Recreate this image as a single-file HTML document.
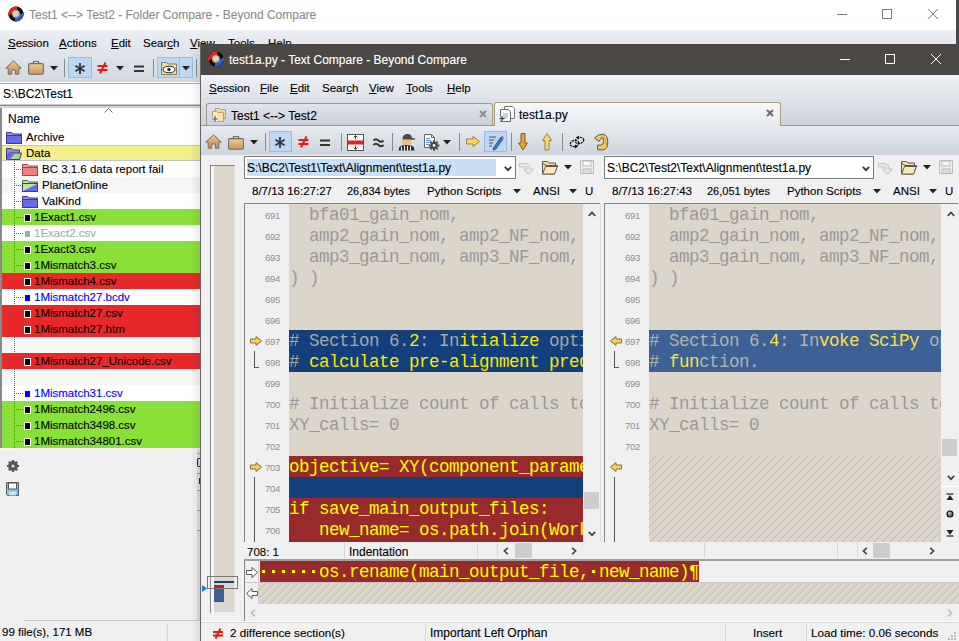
<!DOCTYPE html>
<html><head><meta charset="utf-8">
<style>
*{margin:0;padding:0;box-sizing:border-box}
html,body{width:959px;height:641px;overflow:hidden;background:#fff;position:relative}
body{font-family:"Liberation Sans",sans-serif;font-size:12px;color:#000}
.a{position:absolute}
.t{position:absolute;white-space:pre;line-height:16px;font-size:12px;-webkit-text-stroke:0.12px currentColor}
.m{position:absolute;white-space:pre;font-family:"Liberation Mono",monospace;font-size:17.5px;letter-spacing:-0.5px;line-height:21px}
.u{text-decoration:underline;text-underline-offset:1px}
svg{position:absolute;overflow:visible}
</style></head><body>

<!-- ============ BACKGROUND WINDOW (Folder Compare) ============ -->
<div class="a" style="left:0;top:0;width:959px;height:30px;background:#fff"></div>
<div class="a" style="left:956px;top:0;width:3px;height:44px;background:#4a4846"></div>
<!-- app icon -->
<svg style="left:8px;top:6px" width="16" height="16" viewBox="0 0 16 16">
 <defs><radialGradient id="IG" cx="0.45" cy="0.45" r="0.6"><stop offset="0" stop-color="#d8d8d0"/><stop offset="0.5" stop-color="#d8ccb0"/><stop offset="1" stop-color="#8a8270"/></radialGradient></defs>
 <circle cx="8" cy="8" r="7.6" fill="#0a0a0a"/>
 <path d="M9 0.6 A7.4 7.4 0 0 0 0.8 6.5 L0 6.5 L0 3 L0 10 L5.5 6.5 L4.3 6.5 A3.8 3.8 0 0 1 9 4.2z" fill="#e82424"/>
 <path d="M7 15.4 A7.4 7.4 0 0 0 15.2 9.5 L16 9.5 L16 13 L16 6 L10.5 9.5 L11.7 9.5 A3.8 3.8 0 0 1 7 11.8z" fill="#2a5ae8"/>
 <circle cx="8" cy="8" r="4" fill="url(#IG)"/>
</svg>
<div class="t" style="left:29px;top:7px;color:#8c8c8c">Test1 &lt;--&gt; Test2 - Folder Compare - Beyond Compare</div>
<svg style="left:836px;top:9px" width="110" height="12">
 <line x1="1" y1="5.5" x2="11" y2="5.5" stroke="#777" stroke-width="1"/>
 <rect x="46.5" y="0.5" width="9" height="9" fill="none" stroke="#777"/>
 <path d="M92 0 L102 10 M102 0 L92 10" stroke="#777" stroke-width="1"/>
</svg>

<!-- menu bar -->
<div class="a" style="left:0;top:30px;width:956px;height:52px;background:linear-gradient(#ebeef3,#d3d9e1)"></div>
<div class="t" style="left:8px;top:35px;font-size:11.5px"><span class="u">S</span>ession</div>
<div class="t" style="left:59px;top:35px;font-size:11.5px"><span class="u">A</span>ctions</div>
<div class="t" style="left:111px;top:35px;font-size:11.5px"><span class="u">E</span>dit</div>
<div class="t" style="left:143px;top:35px;font-size:11.5px">Sear<span class="u">c</span>h</div>
<div class="t" style="left:190px;top:35px;font-size:11.5px"><span class="u">V</span>iew</div>
<div class="t" style="left:228px;top:35px;font-size:11.5px"><span class="u">T</span>ools</div>
<div class="t" style="left:268px;top:35px;font-size:11.5px"><span class="u">H</span>elp</div>

<!-- toolbar -->

<svg style="left:5px;top:60px" width="17" height="15" viewBox="0 0 17 15"><defs><linearGradient id="hg" x1="0" y1="0" x2="0" y2="1"><stop offset="0" stop-color="#f0c890"/><stop offset="1" stop-color="#c08850"/></linearGradient></defs><path d="M8.5 0.8 L16.2 8.2 L13.8 8.2 L13.8 14.2 L10.3 14.2 L10.3 10 L6.7 10 L6.7 14.2 L3.2 14.2 L3.2 8.2 L0.8 8.2z" fill="url(#hg)" stroke="#7a6a5a" stroke-width="1" stroke-linejoin="round"/></svg>
<svg style="left:28px;top:60px" width="16" height="15" viewBox="0 0 16 15"><defs><linearGradient id="bg" x1="0" y1="0" x2="0" y2="1"><stop offset="0" stop-color="#f0cc90"/><stop offset="1" stop-color="#c89858"/></linearGradient></defs><path d="M5.5 3.5 L5.5 1.5 L10.5 1.5 L10.5 3.5" fill="none" stroke="#6a6a6a" stroke-width="1.2"/><rect x="0.6" y="3.6" width="14.8" height="10.6" rx="1.5" fill="url(#bg)" stroke="#6a6a6a" stroke-width="1.1"/></svg>
<svg style="left:50px;top:66px" width="8" height="5" viewBox="0 0 8 5"><path d="M0 0 L8 0 L4 4.5z" fill="#222"/></svg>
<div class="a" style="left:64px;top:59px;width:1px;height:18px;background:#8a8a8a"></div>
<div class="a" style="left:68px;top:57px;width:24px;height:21px;background:#bcd8f3;border:1px solid #8cc2ee"></div>
<svg style="left:75px;top:63px" width="10" height="11" viewBox="0 0 10 11"><g stroke="#383838" stroke-width="1.9"><line x1="5" y1="0" x2="5" y2="11"/><line x1="0.4" y1="2.8" x2="9.6" y2="8.2"/><line x1="0.4" y1="8.2" x2="9.6" y2="2.8"/></g></svg>
<svg style="left:97px;top:62px" width="11" height="12" viewBox="0 0 11 12"><g stroke="#e81818" stroke-width="2"><line x1="0.5" y1="4" x2="10.5" y2="4"/><line x1="0.5" y1="8" x2="10.5" y2="8"/><line x1="8.5" y1="0.5" x2="3" y2="11.5"/></g></svg>
<svg style="left:116px;top:66px" width="8" height="5" viewBox="0 0 8 5"><path d="M0 0 L8 0 L4 4.5z" fill="#222"/></svg>
<svg style="left:134px;top:65px" width="10" height="8" viewBox="0 0 10 8"><g stroke="#333" stroke-width="2"><line x1="0" y1="1.5" x2="10" y2="1.5"/><line x1="0" y1="6" x2="10" y2="6"/></g></svg>
<div class="a" style="left:153px;top:59px;width:1px;height:18px;background:#8a8a8a"></div>
<div class="a" style="left:157px;top:57px;width:36px;height:21px;background:#bcd8f3;border:1px solid #8cc2ee"></div>
<div class="a" style="left:179px;top:58px;width:1px;height:19px;background:#90c2ee"></div>
<svg style="left:161px;top:60px" width="16" height="15" viewBox="0 0 16 15"><path d="M0.5 2.5 L5.5 2.5 L7 4 L15.5 4 L15.5 14.5 L0.5 14.5z" fill="#f4dca0" stroke="#8a7a5a"/><ellipse cx="8" cy="9.5" rx="6" ry="3.2" fill="#fff" stroke="#333" stroke-width="1.1"/><circle cx="8" cy="9.5" r="1.8" fill="#333"/></svg>
<svg style="left:182px;top:66px" width="8" height="5" viewBox="0 0 8 5"><path d="M0 0 L8 0 L4 4.5z" fill="#222"/></svg>
<div class="a" style="left:196px;top:59px;width:1px;height:18px;background:#8a8a8a"></div>

<!-- path field -->
<div class="a" style="left:0;top:83px;width:200px;height:22px;background:#fff;border-top:1px solid #aaa;border-bottom:1px solid #ccc"></div>
<div class="t" style="left:3px;top:86px">S:\BC2\Test1</div>
<div class="a" style="left:0;top:105px;width:200px;height:3px;background:#d6d6d6;border-top:1px solid #888"></div>

<!-- tree panel -->
<div class="a" style="left:0;top:108px;width:200px;height:341px;background:#fff;border-left:2px solid #8a8a8a"></div>
<div class="a" style="left:2px;top:129px;width:198px;height:16px;background:#fff"></div>
<div class="a" style="left:2px;top:145px;width:198px;height:16px;background:#f3ef8c;border-top:1px solid #c4c4c4;border-bottom:1px solid #c4c4c4"></div>
<div class="a" style="left:2px;top:161px;width:198px;height:16px;background:#fff"></div>
<div class="a" style="left:2px;top:177px;width:198px;height:16px;background:#f5f6f6"></div>
<div class="a" style="left:2px;top:193px;width:198px;height:16px;background:#fff"></div>
<div class="a" style="left:2px;top:209px;width:198px;height:16px;background:#88e038"></div>
<div class="a" style="left:2px;top:225px;width:198px;height:16px;background:#fff"></div>
<div class="a" style="left:2px;top:241px;width:198px;height:16px;background:#88e038"></div>
<div class="a" style="left:2px;top:257px;width:198px;height:16px;background:#88e038"></div>
<div class="a" style="left:2px;top:273px;width:198px;height:16px;background:#e8292a"></div>
<div class="a" style="left:2px;top:289px;width:198px;height:16px;background:#fff"></div>
<div class="a" style="left:2px;top:305px;width:198px;height:16px;background:#e8292a"></div>
<div class="a" style="left:2px;top:321px;width:198px;height:16px;background:#e8292a"></div>
<div class="a" style="left:2px;top:337px;width:198px;height:16px;background:#f5f6f6"></div>
<div class="a" style="left:2px;top:353px;width:198px;height:16px;background:#e8292a"></div>
<div class="a" style="left:2px;top:369px;width:198px;height:16px;background:#f5f6f6"></div>
<div class="a" style="left:2px;top:385px;width:198px;height:16px;background:#fff"></div>
<div class="a" style="left:2px;top:401px;width:198px;height:16px;background:#88e038"></div>
<div class="a" style="left:2px;top:417px;width:198px;height:16px;background:#88e038"></div>
<div class="a" style="left:2px;top:433px;width:198px;height:16px;background:#88e038"></div>
<svg style="left:6px;top:131px" width="16" height="13" viewBox="0 0 16 13"><path d="M0.5 1.5 L5.5 1.5 L7 3 L15.5 3 L15.5 12.5 L0.5 12.5z" fill="#8c8cd8" stroke="#3c3c8c" stroke-width="1"/><path d="M0.5 4.5 L15.5 4.5 L15.5 12.5 L0.5 12.5z" fill="#6a6af0" stroke="#3c3c8c" stroke-width="1"/></svg>
<div class="t" style="left:26px;top:129px;color:#000;font-size:11.5px">Archive</div>
<svg style="left:6px;top:147px" width="16" height="13" viewBox="0 0 16 13"><path d="M0.5 1.5 L5.5 1.5 L7 3 L13.5 3 L13.5 12.5 L0.5 12.5z" fill="#8c8cd8" stroke="#3c3c8c"/><path d="M0.5 12.5 L3 6 L15.5 6 L13.5 12.5z" fill="#a8d890" stroke="#3c3c8c"/><path d="M0.5 12.5 L3 6 L9 6 L4 12.5z" fill="#6a6af0"/></svg>
<div class="t" style="left:26px;top:145px;color:#000;font-size:11.5px">Data</div>
<div class="a" style="left:14px;top:161px;width:1px;height:16px;background:repeating-linear-gradient(#666 0 1px,transparent 1px 2px)"></div>
<div class="a" style="left:15px;top:169px;width:6px;height:1px;background:repeating-linear-gradient(90deg,transparent 0 1px,#666 1px 2px)"></div>
<svg style="left:22px;top:163px" width="16" height="13" viewBox="0 0 16 13"><path d="M0.5 1.5 L5.5 1.5 L7 3 L15.5 3 L15.5 12.5 L0.5 12.5z" fill="#e8a0a0" stroke="#a04848" stroke-width="1"/><path d="M0.5 4.5 L15.5 4.5 L15.5 12.5 L0.5 12.5z" fill="#f08080" stroke="#a04848" stroke-width="1"/></svg>
<div class="t" style="left:42px;top:161px;color:#000;font-size:11.5px">BC 3.1.6 data report fail</div>
<div class="a" style="left:14px;top:177px;width:1px;height:16px;background:repeating-linear-gradient(#666 0 1px,transparent 1px 2px)"></div>
<div class="a" style="left:15px;top:185px;width:6px;height:1px;background:repeating-linear-gradient(90deg,transparent 0 1px,#666 1px 2px)"></div>
<svg style="left:22px;top:179px" width="16" height="13" viewBox="0 0 16 13"><path d="M0.5 1.5 L5.5 1.5 L7 3 L15.5 3 L15.5 12.5 L0.5 12.5z" fill="#b8e0a0" stroke="#507040"/><path d="M0.5 4.5 L15.5 4.5 L15.5 12.5 L0.5 12.5z" fill="#b8e8a0" stroke="#404070"/><path d="M15 5 L15 12 L1 12z" fill="#6a6af0"/></svg>
<div class="t" style="left:42px;top:177px;color:#000;font-size:11.5px">PlanetOnline</div>
<div class="a" style="left:14px;top:193px;width:1px;height:16px;background:repeating-linear-gradient(#666 0 1px,transparent 1px 2px)"></div>
<div class="a" style="left:15px;top:201px;width:6px;height:1px;background:repeating-linear-gradient(90deg,transparent 0 1px,#666 1px 2px)"></div>
<svg style="left:22px;top:195px" width="16" height="13" viewBox="0 0 16 13"><path d="M0.5 1.5 L5.5 1.5 L7 3 L15.5 3 L15.5 12.5 L0.5 12.5z" fill="#8c8cd8" stroke="#3c3c8c" stroke-width="1"/><path d="M0.5 4.5 L15.5 4.5 L15.5 12.5 L0.5 12.5z" fill="#6a6af0" stroke="#3c3c8c" stroke-width="1"/></svg>
<div class="t" style="left:42px;top:193px;color:#000;font-size:11.5px">ValKind</div>
<div class="a" style="left:14px;top:209px;width:1px;height:16px;background:repeating-linear-gradient(#666 0 1px,transparent 1px 2px)"></div>
<div class="a" style="left:15px;top:217px;width:8px;height:1px;background:repeating-linear-gradient(90deg,transparent 0 1px,#666 1px 2px)"></div>
<div class="a" style="left:24px;top:214px;width:7px;height:8px;background:#000;border:1px solid #fff"></div>
<div class="t" style="left:34px;top:209px;color:#000;font-size:11.5px">1Exact1.csv</div>
<div class="a" style="left:14px;top:225px;width:1px;height:16px;background:repeating-linear-gradient(#666 0 1px,transparent 1px 2px)"></div>
<div class="a" style="left:15px;top:233px;width:8px;height:1px;background:repeating-linear-gradient(90deg,transparent 0 1px,#666 1px 2px)"></div>
<div class="a" style="left:25px;top:231px;width:5px;height:6px;background:#aaa"></div>
<div class="t" style="left:34px;top:225px;color:#aaa;font-size:11.5px">1Exact2.csv</div>
<div class="a" style="left:14px;top:241px;width:1px;height:16px;background:repeating-linear-gradient(#666 0 1px,transparent 1px 2px)"></div>
<div class="a" style="left:15px;top:249px;width:8px;height:1px;background:repeating-linear-gradient(90deg,transparent 0 1px,#666 1px 2px)"></div>
<div class="a" style="left:24px;top:246px;width:7px;height:8px;background:#000;border:1px solid #fff"></div>
<div class="t" style="left:34px;top:241px;color:#000;font-size:11.5px">1Exact3.csv</div>
<div class="a" style="left:14px;top:257px;width:1px;height:16px;background:repeating-linear-gradient(#666 0 1px,transparent 1px 2px)"></div>
<div class="a" style="left:15px;top:265px;width:8px;height:1px;background:repeating-linear-gradient(90deg,transparent 0 1px,#666 1px 2px)"></div>
<div class="a" style="left:24px;top:262px;width:7px;height:8px;background:#000;border:1px solid #fff"></div>
<div class="t" style="left:34px;top:257px;color:#000;font-size:11.5px">1Mismatch3.csv</div>
<div class="a" style="left:14px;top:273px;width:1px;height:16px;background:repeating-linear-gradient(#666 0 1px,transparent 1px 2px)"></div>
<div class="a" style="left:15px;top:281px;width:8px;height:1px;background:repeating-linear-gradient(90deg,transparent 0 1px,#666 1px 2px)"></div>
<div class="a" style="left:24px;top:278px;width:7px;height:8px;background:#000;border:1px solid #fff"></div>
<div class="t" style="left:34px;top:273px;color:#000;font-size:11.5px">1Mismatch4.csv</div>
<div class="a" style="left:14px;top:289px;width:1px;height:16px;background:repeating-linear-gradient(#666 0 1px,transparent 1px 2px)"></div>
<div class="a" style="left:15px;top:297px;width:8px;height:1px;background:repeating-linear-gradient(90deg,transparent 0 1px,#666 1px 2px)"></div>
<div class="a" style="left:25px;top:295px;width:5px;height:6px;background:#0000ff"></div>
<div class="t" style="left:34px;top:289px;color:#0000ff;font-size:11.5px">1Mismatch27.bcdv</div>
<div class="a" style="left:14px;top:305px;width:1px;height:16px;background:repeating-linear-gradient(#666 0 1px,transparent 1px 2px)"></div>
<div class="a" style="left:15px;top:313px;width:8px;height:1px;background:repeating-linear-gradient(90deg,transparent 0 1px,#666 1px 2px)"></div>
<div class="a" style="left:24px;top:310px;width:7px;height:8px;background:#000;border:1px solid #fff"></div>
<div class="t" style="left:34px;top:305px;color:#000;font-size:11.5px">1Mismatch27.csv</div>
<div class="a" style="left:14px;top:321px;width:1px;height:16px;background:repeating-linear-gradient(#666 0 1px,transparent 1px 2px)"></div>
<div class="a" style="left:15px;top:329px;width:8px;height:1px;background:repeating-linear-gradient(90deg,transparent 0 1px,#666 1px 2px)"></div>
<div class="a" style="left:24px;top:326px;width:7px;height:8px;background:#000;border:1px solid #fff"></div>
<div class="t" style="left:34px;top:321px;color:#000;font-size:11.5px">1Mismatch27.htm</div>
<div class="a" style="left:14px;top:337px;width:1px;height:16px;background:repeating-linear-gradient(#666 0 1px,transparent 1px 2px)"></div>
<div class="a" style="left:14px;top:353px;width:1px;height:16px;background:repeating-linear-gradient(#666 0 1px,transparent 1px 2px)"></div>
<div class="a" style="left:15px;top:361px;width:8px;height:1px;background:repeating-linear-gradient(90deg,transparent 0 1px,#666 1px 2px)"></div>
<div class="a" style="left:24px;top:358px;width:7px;height:8px;background:#000;border:1px solid #fff"></div>
<div class="t" style="left:34px;top:353px;color:#000;font-size:11.5px">1Mismatch27_Unicode.csv</div>
<div class="a" style="left:14px;top:369px;width:1px;height:16px;background:repeating-linear-gradient(#666 0 1px,transparent 1px 2px)"></div>
<div class="a" style="left:14px;top:385px;width:1px;height:16px;background:repeating-linear-gradient(#666 0 1px,transparent 1px 2px)"></div>
<div class="a" style="left:15px;top:393px;width:8px;height:1px;background:repeating-linear-gradient(90deg,transparent 0 1px,#666 1px 2px)"></div>
<div class="a" style="left:25px;top:391px;width:5px;height:6px;background:#0000ff"></div>
<div class="t" style="left:34px;top:385px;color:#0000ff;font-size:11.5px">1Mismatch31.csv</div>
<div class="a" style="left:14px;top:401px;width:1px;height:16px;background:repeating-linear-gradient(#666 0 1px,transparent 1px 2px)"></div>
<div class="a" style="left:15px;top:409px;width:8px;height:1px;background:repeating-linear-gradient(90deg,transparent 0 1px,#666 1px 2px)"></div>
<div class="a" style="left:24px;top:406px;width:7px;height:8px;background:#000;border:1px solid #fff"></div>
<div class="t" style="left:34px;top:401px;color:#000;font-size:11.5px">1Mismatch2496.csv</div>
<div class="a" style="left:14px;top:417px;width:1px;height:16px;background:repeating-linear-gradient(#666 0 1px,transparent 1px 2px)"></div>
<div class="a" style="left:15px;top:425px;width:8px;height:1px;background:repeating-linear-gradient(90deg,transparent 0 1px,#666 1px 2px)"></div>
<div class="a" style="left:24px;top:422px;width:7px;height:8px;background:#000;border:1px solid #fff"></div>
<div class="t" style="left:34px;top:417px;color:#000;font-size:11.5px">1Mismatch3498.csv</div>
<div class="a" style="left:14px;top:433px;width:1px;height:16px;background:repeating-linear-gradient(#666 0 1px,transparent 1px 2px)"></div>
<div class="a" style="left:15px;top:441px;width:8px;height:1px;background:repeating-linear-gradient(90deg,transparent 0 1px,#666 1px 2px)"></div>
<div class="a" style="left:24px;top:438px;width:7px;height:8px;background:#000;border:1px solid #fff"></div>
<div class="t" style="left:34px;top:433px;color:#000;font-size:11.5px">1Mismatch34801.csv</div>

<!-- bottom panel -->
<div class="a" style="left:0;top:448px;width:200px;height:172px;background:#f0f0f0"></div>
<div class="a" style="left:0;top:448px;width:18px;height:2px;background:#fafafa"></div>
<div class="t" style="left:8px;top:110.53px;font-size:12px;color:#000;">Name</div>
<svg style="left:104px;top:108px" width="9" height="5" viewBox="0 0 9 5"><path d="M0.5 4.5 L4.5 0.5 L8.5 4.5" fill="none" stroke="#777" stroke-width="1"/></svg>
<svg style="left:7px;top:460px" width="12" height="12" viewBox="0 0 12 12"><circle cx="6" cy="6" r="3.6" fill="none" stroke="#555" stroke-width="2.6"/><g stroke="#555" stroke-width="2"><line x1="6" y1="0" x2="6" y2="12"/><line x1="0" y1="6" x2="12" y2="6"/><line x1="1.8" y1="1.8" x2="10.2" y2="10.2"/><line x1="10.2" y1="1.8" x2="1.8" y2="10.2"/></g><circle cx="6" cy="6" r="1.6" fill="#ddd"/></svg>
<svg style="left:6px;top:482px" width="13" height="14" viewBox="0 0 13 14"><path d="M0.5 0.5 L12.5 0.5 L12.5 13.5 L1.5 13.5 L0.5 12.5z" fill="#70c8f0" stroke="#555"/><rect x="2.5" y="1" width="8" height="6" fill="#fff" stroke="#555"/><rect x="3" y="9.5" width="7" height="4" fill="#ddd"/></svg>
<div class="a" style="left:24px;top:620px;width:176px;height:1px;background:#c8c8c8"></div>
<div class="a" style="left:167px;top:623px;width:1px;height:18px;background:#d8d8d8"></div>
<div class="a" style="left:197px;top:449px;width:3px;height:171px;background:#dedede"></div>
<div class="a" style="left:197px;top:453px;width:3px;height:1px;background:#999"></div>
<div class="a" style="left:197px;top:473px;width:3px;height:1px;background:#999"></div>
<div class="a" style="left:197px;top:490px;width:3px;height:1px;background:#999"></div>
<div class="a" style="left:197px;top:510px;width:3px;height:1px;background:#999"></div>
<div class="a" style="left:197px;top:530px;width:3px;height:1px;background:#999"></div>
<svg style="left:197px;top:458px" width="3" height="9" viewBox="0 0 3 9"><path d="M3 0.5 L1 0.5 Q0.5 0.5 0.5 2 L0.5 7 Q0.5 8.5 1 8.5 L3 8.5" fill="none" stroke="#222" stroke-width="1"/></svg>
<div class="a" style="left:199px;top:478px;width:1px;height:6px;background:#5a1020"></div>

<!-- status -->
<div class="a" style="left:0;top:620px;width:200px;height:21px;background:#f0f0f0"></div>
<div class="a" style="left:24px;top:620px;width:176px;height:1px;background:#c8c8c8"></div>
<div class="a" style="left:167px;top:623px;width:1px;height:18px;background:#d8d8d8"></div>
<div class="t" style="left:2px;top:624px;font-size:11.5px">99 file(s), 171 MB</div>

<!-- ============ FOREGROUND WINDOW (Text Compare) ============ -->
<div class="a" style="left:190px;top:44px;width:10px;height:597px;background:linear-gradient(90deg,rgba(0,0,0,0),rgba(0,0,0,0.08))"></div>
<div class="a" style="left:200px;top:44px;width:759px;height:597px;background:#f0f0f0;border-left:1px solid #666"></div>
<div class="a" style="left:201px;top:44px;width:758px;height:31px;background:#4b4845"></div>
<svg style="left:208px;top:51px" width="16" height="16" viewBox="0 0 16 16">
 <defs><radialGradient id="IG2" cx="0.45" cy="0.45" r="0.6"><stop offset="0" stop-color="#d8d8d0"/><stop offset="0.5" stop-color="#d8ccb0"/><stop offset="1" stop-color="#8a8270"/></radialGradient></defs>
 <circle cx="8" cy="8" r="7.6" fill="#0a0a0a"/>
 <path d="M9 0.6 A7.4 7.4 0 0 0 0.8 6.5 L0 6.5 L0 3 L0 10 L5.5 6.5 L4.3 6.5 A3.8 3.8 0 0 1 9 4.2z" fill="#e82424"/>
 <path d="M7 15.4 A7.4 7.4 0 0 0 15.2 9.5 L16 9.5 L16 13 L16 6 L10.5 9.5 L11.7 9.5 A3.8 3.8 0 0 1 7 11.8z" fill="#2a5ae8"/>
 <circle cx="8" cy="8" r="4" fill="url(#IG2)"/>
</svg>
<div class="t" style="left:229px;top:52px;color:#fff">test1a.py - Text Compare - Beyond Compare</div>
<svg style="left:840px;top:54px" width="110" height="12">
 <line x1="0" y1="5.5" x2="10" y2="5.5" stroke="#fff" stroke-width="1"/>
 <rect x="45.5" y="0.5" width="9" height="9" fill="none" stroke="#fff"/>
 <path d="M91 0 L101 10 M101 0 L91 10" stroke="#fff" stroke-width="1"/>
</svg>

<!-- fg menu -->
<div class="a" style="left:201px;top:75px;width:758px;height:51px;background:linear-gradient(#eef1f5,#cbd2dc)"></div>
<div class="t" style="left:209px;top:79.70px;font-size:11.5px;color:#000;"><span class="u">S</span>ession</div>
<div class="t" style="left:260px;top:79.70px;font-size:11.5px;color:#000;"><span class="u">F</span>ile</div>
<div class="t" style="left:290px;top:79.70px;font-size:11.5px;color:#000;"><span class="u">E</span>dit</div>
<div class="t" style="left:322px;top:79.70px;font-size:11.5px;color:#000;">Sear<span class="u">c</span>h</div>
<div class="t" style="left:369px;top:79.70px;font-size:11.5px;color:#000;"><span class="u">V</span>iew</div>
<div class="t" style="left:406px;top:79.70px;font-size:11.5px;color:#000;"><span class="u">T</span>ools</div>
<div class="t" style="left:447px;top:79.70px;font-size:11.5px;color:#000;"><span class="u">H</span>elp</div>
<div class="a" style="left:201px;top:125px;width:758px;height:1px;background:#a89a80"></div>
<div class="a" style="left:206px;top:103px;width:287px;height:23px;border:1px solid #a89a80;border-bottom:none;border-radius:3px 3px 0 0;background:linear-gradient(#e0e4ea,#c9d0da)"></div>
<div class="a" style="left:206px;top:125px;width:287px;height:1px;background:#a89a80"></div>
<svg style="left:211px;top:107px" width="16" height="16" viewBox="0 0 16 16"><path d="M4.5 1.5 L8.5 1.5 L9.5 2.5 L14.5 2.5 L14.5 11.5 L4.5 11.5z" fill="#f0d8a0" stroke="#b8a070"/><path d="M1.5 4.5 L5.5 4.5 L6.5 5.5 L12.5 5.5 L12.5 14.5 L1.5 14.5z" fill="#fbe4b0" stroke="#b8a070"/><path d="M1 12 L7 12 M4 9 L4 15" stroke="#fff" stroke-width="3"/><path d="M1 12 L7 12 M4 9 L4 15" stroke="#555" stroke-width="1.2"/></svg>
<div class="t" style="left:231px;top:107.53px;font-size:12px;color:#000;">Test1 &lt;--&gt; Test2</div>
<svg style="left:479px;top:110px" width="8" height="8" viewBox="0 0 8 8"><path d="M1 1 L7 7 M7 1 L1 7" stroke="#8a8a8a" stroke-width="2"/></svg>
<div class="a" style="left:494px;top:102px;width:287px;height:24px;border:1px solid #a89a80;border-bottom:none;border-radius:3px 3px 0 0;background:linear-gradient(#f6f8fa,#e6e9ee)"></div>
<div class="a" style="left:495px;top:125px;width:285px;height:1px;background:#e6e9ee"></div>
<svg style="left:499px;top:106px" width="16" height="16" viewBox="0 0 16 16"><path d="M5.5 0.5 L13.5 0.5 L15.5 2.5 L15.5 12.5 L5.5 12.5z" fill="#fff" stroke="#777"/><path d="M1.5 3.5 L9.5 3.5 L11.5 5.5 L11.5 15.5 L1.5 15.5z" fill="#fff" stroke="#666"/><path d="M4 8 L9 8 M4 10 L9 10 M4 12 L8 12" stroke="#7aa0d0" stroke-width="1"/><path d="M0.5 12.5 L5.5 12.5 M3 10 L3 15" stroke="#fff" stroke-width="3"/><path d="M0.5 12.5 L5.5 12.5 M3 10 L3 15" stroke="#444" stroke-width="1.3"/></svg>
<div class="t" style="left:519px;top:106.53px;font-size:12px;color:#000;">test1a.py</div>
<svg style="left:766px;top:109px" width="8" height="8" viewBox="0 0 8 8"><path d="M1 1 L7 7 M7 1 L1 7" stroke="#6a6a6a" stroke-width="2"/></svg>
<div class="a" style="left:201px;top:126px;width:758px;height:29px;background:linear-gradient(#e7ebf0,#cdd4dd)"></div>
<svg style="left:205px;top:134px" width="17" height="15" viewBox="0 0 17 15"><defs><linearGradient id="hg" x1="0" y1="0" x2="0" y2="1"><stop offset="0" stop-color="#f0c890"/><stop offset="1" stop-color="#c08850"/></linearGradient></defs><path d="M8.5 0.8 L16.2 8.2 L13.8 8.2 L13.8 14.2 L10.3 14.2 L10.3 10 L6.7 10 L6.7 14.2 L3.2 14.2 L3.2 8.2 L0.8 8.2z" fill="url(#hg)" stroke="#7a6a5a" stroke-width="1" stroke-linejoin="round"/></svg>
<svg style="left:228px;top:135px" width="16" height="15" viewBox="0 0 16 15"><defs><linearGradient id="bg" x1="0" y1="0" x2="0" y2="1"><stop offset="0" stop-color="#f0cc90"/><stop offset="1" stop-color="#c89858"/></linearGradient></defs><path d="M5.5 3.5 L5.5 1.5 L10.5 1.5 L10.5 3.5" fill="none" stroke="#6a6a6a" stroke-width="1.2"/><rect x="0.6" y="3.6" width="14.8" height="10.6" rx="1.5" fill="url(#bg)" stroke="#6a6a6a" stroke-width="1.1"/></svg>
<svg style="left:250px;top:140px" width="8" height="5" viewBox="0 0 8 5"><path d="M0 0 L8 0 L4 4.5z" fill="#222"/></svg>
<div class="a" style="left:265px;top:133px;width:1px;height:18px;background:#8a8a8a"></div>
<div class="a" style="left:269px;top:131px;width:23px;height:21px;background:#bcd8f3;border:1px solid #8cc2ee"></div>
<svg style="left:275px;top:137px" width="10" height="11" viewBox="0 0 10 11"><g stroke="#383838" stroke-width="1.9"><line x1="5" y1="0" x2="5" y2="11"/><line x1="0.4" y1="2.8" x2="9.6" y2="8.2"/><line x1="0.4" y1="8.2" x2="9.6" y2="2.8"/></g></svg>
<svg style="left:298px;top:136px" width="11" height="12" viewBox="0 0 11 12"><g stroke="#e81818" stroke-width="2"><line x1="0.5" y1="4" x2="10.5" y2="4"/><line x1="0.5" y1="8" x2="10.5" y2="8"/><line x1="8.5" y1="0.5" x2="3" y2="11.5"/></g></svg>
<svg style="left:320px;top:139px" width="10" height="8" viewBox="0 0 10 8"><g stroke="#333" stroke-width="2"><line x1="0" y1="1.5" x2="10" y2="1.5"/><line x1="0" y1="6" x2="10" y2="6"/></g></svg>
<div class="a" style="left:341px;top:133px;width:1px;height:18px;background:#8a8a8a"></div>
<svg style="left:347px;top:134px" width="17" height="17" viewBox="0 0 17 17"><rect x="0.5" y="0.5" width="16" height="16" fill="#fff" stroke="#555"/><rect x="1" y="6.5" width="15" height="4" fill="#e82020"/><path d="M8.5 1.5 L8.5 5.5 M6.5 3.5 L8.5 1.5 L10.5 3.5 M8.5 11.5 L8.5 15.5 M6.5 13.5 L8.5 15.5 L10.5 13.5" stroke="#444" fill="none"/></svg>
<svg style="left:373px;top:137px" width="11" height="10" viewBox="0 0 11 10"><path d="M0.5 3.5 Q3 1 5.5 3.5 Q8 6 10.5 3.5 M0.5 8 Q3 5.5 5.5 8 Q8 10.5 10.5 8" stroke="#333" stroke-width="1.8" fill="none"/></svg>
<div class="a" style="left:392px;top:133px;width:1px;height:18px;background:#8a8a8a"></div>
<svg style="left:398px;top:133px" width="17" height="18" viewBox="0 0 17 18"><path d="M4.5 6.5 Q4.5 1 9.5 1 Q13.5 1 14 5 L17 5.5 L17 6.8 L4.5 6.8z" fill="#4a4a4a"/><path d="M4 6.5 Q3 9 4.5 11 Q6 12.5 9 12.5 Q12 12.5 13 10.5 L13 6.8z" fill="#f0c080"/><path d="M0.5 17.5 L1.5 14 Q3 12 8.5 12 Q14 12 15.5 14 L16.5 17.5z" fill="#222"/><path d="M3.5 13.5 L3.5 17.5 M6.5 12.8 L6.5 17.5 M9.5 12.8 L9.5 17.5 M12.5 13.2 L12.5 17.5" stroke="#fff" stroke-width="1.2"/></svg>
<svg style="left:423px;top:133px" width="17" height="18" viewBox="0 0 17 18"><path d="M1.5 1.5 L8.5 1.5 L11.5 4.5 L11.5 14.5 L1.5 14.5z" fill="#fff" stroke="#666"/><path d="M8.5 1.5 L8.5 4.5 L11.5 4.5" fill="none" stroke="#666"/><path d="M3 5.5 L7 5.5 M3 7.5 L8 7.5 M3 9.5 L7 9.5 M3 11.5 L6 11.5" stroke="#4a80c0" stroke-width="0.9"/><circle cx="11" cy="12.5" r="3.6" fill="#4a4a4a"/><g stroke="#4a4a4a" stroke-width="2"><line x1="11" y1="7.2" x2="11" y2="17.8"/><line x1="5.7" y1="12.5" x2="16.3" y2="12.5"/><line x1="7.3" y1="8.8" x2="14.7" y2="16.2"/><line x1="14.7" y1="8.8" x2="7.3" y2="16.2"/></g><circle cx="11" cy="12.5" r="1.4" fill="#eee"/></svg>
<svg style="left:443px;top:140px" width="8" height="5" viewBox="0 0 8 5"><path d="M0 0 L8 0 L4 4.5z" fill="#222"/></svg>
<div class="a" style="left:459px;top:133px;width:1px;height:18px;background:#8a8a8a"></div>
<svg style="left:466px;top:136px" width="14" height="11" viewBox="0 0 14 11"><path d="M0.5 3 L7 3 L7 0.5 L13.5 5.5 L7 10.5 L7 8 L0.5 8z" fill="#fcd860" stroke="#9a8040"/></svg>
<div class="a" style="left:484px;top:131px;width:23px;height:21px;background:#bcd8f3;border:1px solid #8cc2ee"></div>
<svg style="left:488px;top:134px" width="16" height="16" viewBox="0 0 16 16"><path d="M1 3 L8 3 M1 6 L6 6 M1 9 L5 9 M1 12 L4 12" stroke="#555" stroke-width="1.2"/><path d="M6 13 L13 3 L15 5 L8 15 L5 16z" fill="#3c7ad0" stroke="#2a4a80" stroke-width="0.8"/><path d="M13 3 L14 1.5 L16 3.5 L15 5z" fill="#e06060"/></svg>
<div class="a" style="left:511px;top:133px;width:1px;height:18px;background:#8a8a8a"></div>
<svg style="left:518px;top:133px" width="10" height="18" viewBox="0 0 10 18"><path d="M3 0.5 L7 0.5 L7 10 L9.5 10 L5 17 L0.5 10 L3 10z" fill="#e8a030" stroke="#8a5a10"/></svg>
<svg style="left:542px;top:133px" width="10" height="18" viewBox="0 0 10 18"><path d="M5 0.5 L9.5 7.5 L7 7.5 L7 17 L3 17 L3 7.5 L0.5 7.5z" fill="#fcd870" stroke="#9a8040"/></svg>
<div class="a" style="left:562px;top:133px;width:1px;height:18px;background:#8a8a8a"></div>
<svg style="left:569px;top:135px" width="16" height="14" viewBox="0 0 16 14"><g fill="none" stroke="#111" stroke-width="1.3" stroke-dasharray="2.2 0.8"><ellipse cx="10.5" cy="5.5" rx="4.3" ry="3" transform="rotate(-15 10.5 5.5)"/><ellipse cx="5.5" cy="8.5" rx="4.3" ry="3" transform="rotate(-15 5.5 8.5)"/></g><path d="M7 2.5 L10 0.5 L10 4.5z M9 11.5 L6 13.5 L6 9.5z" fill="#111"/></svg>
<svg style="left:593px;top:133px" width="16" height="18" viewBox="0 0 16 18"><path d="M1.5 5 Q5 1 10 1.2 Q14.8 2 14.8 9 Q14.8 16.5 10 16.8 L4.8 16.8 L4.3 12.2 L8.5 12 Q10.5 11.5 10.5 8.5 Q10.5 4.8 8.8 4.2 L6 8.5z" fill="#f0c850" stroke="#555" stroke-width="1"/><path d="M10.5 4 Q13.5 6 13 12" stroke="#d0a040" fill="none"/></svg>
<div class="a" style="left:201px;top:155px;width:758px;height:466px;background:#f0f0f0"></div>
<div class="a" style="left:210px;top:165px;width:1px;height:448px;background:#888"></div>
<div class="a" style="left:210px;top:165px;width:25px;height:1px;background:#888"></div>
<div class="a" style="left:211px;top:166px;width:3px;height:447px;background:#f8f8f8"></div>
<div class="a" style="left:214px;top:166px;width:20px;height:446px;background:#ddd6cc"></div>
<div class="a" style="left:234px;top:166px;width:1px;height:447px;background:#e4e4e4"></div>
<div class="a" style="left:214px;top:581px;width:20px;height:2px;background:#133f7d"></div>
<div class="a" style="left:214px;top:585px;width:10px;height:3px;background:#a52a2a"></div>
<div class="a" style="left:214px;top:588px;width:10px;height:13px;background:#3d6195"></div>
<div class="a" style="left:214px;top:601px;width:10px;height:1px;background:#a52a2a"></div>
<div class="a" style="left:207px;top:576px;width:31px;height:13px;border:1px solid #777"></div>
<svg style="left:202px;top:585px" width="5" height="7" viewBox="0 0 5 7"><path d="M0 0 L5 3.5 L0 7z" fill="#1e7ad0"/></svg>
<div class="a" style="left:244px;top:156px;width:272px;height:23px;background:#fff;border:1px solid #7a7a7a"></div>
<div class="a" style="left:247px;top:159px;width:249px;height:17px;background:#c7dff7"></div>
<div class="t" style="left:247px;top:160.03px;font-size:12px;color:#000;">S:\BC2\Test1\Text\Alignment\test1a.py</div>
<svg style="left:504px;top:166px" width="8" height="6" viewBox="0 0 8 6"><path d="M0.8 0.8 L4 4.2 L7.2 0.8" fill="none" stroke="#333" stroke-width="1.7"/></svg>
<svg style="left:519px;top:161px" width="16" height="14" viewBox="0 0 16 14"><path d="M0.5 2.5 L6 2.5 Q11 2.5 11 7 L11 8 L14.5 8 L9.5 13.5 L4.5 8 L8 8 L8 7.5 Q8 6 6 6 L0.5 6z" fill="#e8e8e8" stroke="#c4c4c4" stroke-width="1"/></svg>
<svg style="left:542px;top:160px" width="16" height="15" viewBox="0 0 16 15"><path d="M0.5 1.5 L5.5 1.5 L7 3 L13.5 3 L13.5 5.5 L0.5 5.5z" fill="#f6dca4" stroke="#5a5a5a"/><path d="M0.5 14 L0.5 3 L4 5.5 L15.5 5.5 L12.5 14z" fill="#fbe0a8" stroke="#5a5a5a"/><path d="M0.5 14 L3.5 6.5 L15.5 6.5 L12.5 14z" fill="#fde6b4" stroke="#5a5a5a"/></svg>
<svg style="left:564px;top:165px" width="8" height="5" viewBox="0 0 8 5"><path d="M0 0 L8 0 L4 4.5z" fill="#222"/></svg>
<svg style="left:580px;top:160px" width="14" height="14" viewBox="0 0 14 14"><path d="M0.5 0.5 L13.5 0.5 L13.5 13.5 L0.5 13.5z" fill="#eee" stroke="#bbb"/><rect x="3" y="1" width="8" height="5" fill="#f6f6f6" stroke="#bbb"/><rect x="3" y="9" width="8" height="4.5" fill="#ddd" stroke="#bbb"/></svg>
<div class="a" style="left:604px;top:156px;width:270px;height:23px;background:#fff;border:1px solid #7a7a7a"></div>
<div class="t" style="left:607px;top:160.03px;font-size:12px;color:#000;">S:\BC2\Test2\Text\Alignment\test1a.py</div>
<svg style="left:862px;top:166px" width="8" height="6" viewBox="0 0 8 6"><path d="M0.8 0.8 L4 4.2 L7.2 0.8" fill="none" stroke="#333" stroke-width="1.7"/></svg>
<svg style="left:878px;top:161px" width="16" height="14" viewBox="0 0 16 14"><path d="M0.5 2.5 L6 2.5 Q11 2.5 11 7 L11 8 L14.5 8 L9.5 13.5 L4.5 8 L8 8 L8 7.5 Q8 6 6 6 L0.5 6z" fill="#e8e8e8" stroke="#c4c4c4" stroke-width="1"/></svg>
<svg style="left:901px;top:160px" width="16" height="15" viewBox="0 0 16 15"><path d="M0.5 1.5 L5.5 1.5 L7 3 L13.5 3 L13.5 5.5 L0.5 5.5z" fill="#f6dca4" stroke="#5a5a5a"/><path d="M0.5 14 L0.5 3 L4 5.5 L15.5 5.5 L12.5 14z" fill="#fbe0a8" stroke="#5a5a5a"/><path d="M0.5 14 L3.5 6.5 L15.5 6.5 L12.5 14z" fill="#fde6b4" stroke="#5a5a5a"/></svg>
<svg style="left:923px;top:165px" width="8" height="5" viewBox="0 0 8 5"><path d="M0 0 L8 0 L4 4.5z" fill="#222"/></svg>
<svg style="left:939px;top:160px" width="14" height="14" viewBox="0 0 14 14"><path d="M0.5 0.5 L13.5 0.5 L13.5 13.5 L0.5 13.5z" fill="#eee" stroke="#bbb"/><rect x="3" y="1" width="8" height="5" fill="#f6f6f6" stroke="#bbb"/><rect x="3" y="9" width="8" height="4.5" fill="#ddd" stroke="#bbb"/></svg>
<div class="t" style="left:252px;top:183.20px;font-size:11.5px;color:#000;">8/7/13 16:27:27</div>
<div class="t" style="left:347px;top:183.36px;font-size:11px;color:#000;">26,834 bytes</div>
<div class="t" style="left:427px;top:183.20px;font-size:11.5px;color:#000;">Python Scripts</div>
<svg style="left:513px;top:189px" width="8" height="5" viewBox="0 0 8 5"><path d="M0 0 L8 0 L4 4.5z" fill="#222"/></svg>
<div class="t" style="left:533px;top:183.20px;font-size:11.5px;color:#000;">ANSI</div>
<svg style="left:569px;top:189px" width="8" height="5" viewBox="0 0 8 5"><path d="M0 0 L8 0 L4 4.5z" fill="#222"/></svg>
<div class="t" style="left:585px;top:183.20px;font-size:11.5px;color:#000;">U</div>
<div class="t" style="left:612px;top:183.20px;font-size:11.5px;color:#000;">8/7/13 16:27:43</div>
<div class="t" style="left:707px;top:183.36px;font-size:11px;color:#000;">26,051 bytes</div>
<div class="t" style="left:787px;top:183.20px;font-size:11.5px;color:#000;">Python Scripts</div>
<svg style="left:873px;top:189px" width="8" height="5" viewBox="0 0 8 5"><path d="M0 0 L8 0 L4 4.5z" fill="#222"/></svg>
<div class="t" style="left:893px;top:183.20px;font-size:11.5px;color:#000;">ANSI</div>
<svg style="left:929px;top:189px" width="8" height="5" viewBox="0 0 8 5"><path d="M0 0 L8 0 L4 4.5z" fill="#222"/></svg>
<div class="t" style="left:945px;top:183.20px;font-size:11.5px;color:#000;">U</div>
<div class="a" style="left:244px;top:203px;width:1px;height:339px;background:#828282"></div>
<div class="a" style="left:244px;top:203px;width:356px;height:1px;background:#828282"></div>
<div class="a" style="left:245px;top:204px;width:44px;height:338px;background:#f0f0f0"></div>
<div class="a" style="left:289px;top:204px;width:294px;height:338px;background:#dcd5ca"></div>
<div class="t" style="left:245px;top:208px;width:35px;text-align:right;font-size:9.6px;letter-spacing:-0.35px;color:#8f8f8f;-webkit-text-stroke:0">691</div>
<div class="m" style="left:289px;top:205px"><span style="color:#999999">  bfa01_gain_nom,</span></div>
<div class="t" style="left:245px;top:229px;width:35px;text-align:right;font-size:9.6px;letter-spacing:-0.35px;color:#8f8f8f;-webkit-text-stroke:0">692</div>
<div class="m" style="left:289px;top:226px"><span style="color:#999999">  amp2_gain_nom, amp2_NF_nom,</span></div>
<div class="t" style="left:245px;top:250px;width:35px;text-align:right;font-size:9.6px;letter-spacing:-0.35px;color:#8f8f8f;-webkit-text-stroke:0">693</div>
<div class="m" style="left:289px;top:247px"><span style="color:#999999">  amp3_gain_nom, amp3_NF_nom,</span></div>
<div class="t" style="left:245px;top:271px;width:35px;text-align:right;font-size:9.6px;letter-spacing:-0.35px;color:#8f8f8f;-webkit-text-stroke:0">694</div>
<div class="m" style="left:289px;top:268px"><span style="color:#999999">) )</span></div>
<div class="t" style="left:245px;top:292px;width:35px;text-align:right;font-size:9.6px;letter-spacing:-0.35px;color:#8f8f8f;-webkit-text-stroke:0">695</div>
<div class="t" style="left:245px;top:313px;width:35px;text-align:right;font-size:9.6px;letter-spacing:-0.35px;color:#8f8f8f;-webkit-text-stroke:0">696</div>
<div class="t" style="left:245px;top:334px;width:35px;text-align:right;font-size:9.6px;letter-spacing:-0.35px;color:#8f8f8f;-webkit-text-stroke:0">697</div>
<div class="a" style="left:289px;top:330px;width:294px;height:21px;background:#133f7d"></div>
<div class="m" style="left:289px;top:331px"><span style="color:#a6a6a6"># Section 6.</span><span style="color:#ffe600">2</span><span style="color:#a6a6a6">: In</span><span style="color:#ffe600">itialize</span><span style="color:#a6a6a6"> opti</span></div>
<div class="t" style="left:245px;top:355px;width:35px;text-align:right;font-size:9.6px;letter-spacing:-0.35px;color:#8f8f8f;-webkit-text-stroke:0">698</div>
<div class="a" style="left:289px;top:351px;width:294px;height:21px;background:#133f7d"></div>
<div class="m" style="left:289px;top:352px"><span style="color:#a6a6a6"># </span><span style="color:#ffe600">calculate pre-alignment pred</span></div>
<div class="t" style="left:245px;top:376px;width:35px;text-align:right;font-size:9.6px;letter-spacing:-0.35px;color:#8f8f8f;-webkit-text-stroke:0">699</div>
<div class="t" style="left:245px;top:397px;width:35px;text-align:right;font-size:9.6px;letter-spacing:-0.35px;color:#8f8f8f;-webkit-text-stroke:0">700</div>
<div class="m" style="left:289px;top:394px"><span style="color:#999999"># Initialize count of calls to</span></div>
<div class="t" style="left:245px;top:418px;width:35px;text-align:right;font-size:9.6px;letter-spacing:-0.35px;color:#8f8f8f;-webkit-text-stroke:0">701</div>
<div class="m" style="left:289px;top:415px"><span style="color:#999999">XY_calls= 0</span></div>
<div class="t" style="left:245px;top:439px;width:35px;text-align:right;font-size:9.6px;letter-spacing:-0.35px;color:#8f8f8f;-webkit-text-stroke:0">702</div>
<div class="t" style="left:245px;top:460px;width:35px;text-align:right;font-size:9.6px;letter-spacing:-0.35px;color:#8f8f8f;-webkit-text-stroke:0">703</div>
<div class="a" style="left:289px;top:456px;width:294px;height:21px;background:#982a2c"></div>
<div class="m" style="left:289px;top:457px"><span style="color:#ffff00">objective= XY(component_parame</span></div>
<div class="t" style="left:245px;top:481px;width:35px;text-align:right;font-size:9.6px;letter-spacing:-0.35px;color:#8f8f8f;-webkit-text-stroke:0">704</div>
<div class="a" style="left:289px;top:477px;width:294px;height:21px;background:#133f7d"></div>
<div class="m" style="left:289px;top:478px"></div>
<div class="t" style="left:245px;top:502px;width:35px;text-align:right;font-size:9.6px;letter-spacing:-0.35px;color:#8f8f8f;-webkit-text-stroke:0">705</div>
<div class="a" style="left:289px;top:498px;width:294px;height:21px;background:#982a2c"></div>
<div class="m" style="left:289px;top:499px"><span style="color:#ffff00">if save_main_output_files:</span></div>
<div class="t" style="left:245px;top:523px;width:35px;text-align:right;font-size:9.6px;letter-spacing:-0.35px;color:#8f8f8f;-webkit-text-stroke:0">706</div>
<div class="a" style="left:289px;top:519px;width:294px;height:21px;background:#982a2c"></div>
<div class="m" style="left:289px;top:520px"><span style="color:#ffff00">   new_name= os.path.join(Work</span></div>
<div class="a" style="left:289px;top:540px;width:294px;height:21px;background:#982a2c"></div>
<div class="m" style="left:289px;top:541px"></div>
<div class="a" style="left:583px;top:204px;width:17px;height:338px;background:#f0f0f0"></div>
<svg style="left:588px;top:211px" width="8" height="6" viewBox="0 0 8 6"><path d="M0.8 4.8 L4 1.4 L7.2 4.8" fill="none" stroke="#444" stroke-width="1.7"/></svg>
<div class="a" style="left:584px;top:492px;width:15px;height:17px;background:#cdcdcd"></div>
<svg style="left:588px;top:531px" width="8" height="6" viewBox="0 0 8 6"><path d="M0.8 0.8 L4 4.2 L7.2 0.8" fill="none" stroke="#444" stroke-width="1.7"/></svg>
<div class="a" style="left:600px;top:203px;width:1px;height:339px;background:#ddd"></div>
<svg style="left:250px;top:336px" width="12" height="10" viewBox="0 0 12 10"><path d="M0.5 3 L6 3 L6 0.5 L11.5 5 L6 9.5 L6 7 L0.5 7z" fill="#f7d058" stroke="#8a7030"/></svg>
<div class="a" style="left:254px;top:351px;width:1px;height:17px;background:#555"></div>
<div class="a" style="left:254px;top:367px;width:5px;height:1px;background:#555"></div>
<svg style="left:250px;top:462px" width="12" height="10" viewBox="0 0 12 10"><path d="M0.5 3 L6 3 L6 0.5 L11.5 5 L6 9.5 L6 7 L0.5 7z" fill="#f7d058" stroke="#8a7030"/></svg>
<div class="a" style="left:254px;top:477px;width:1px;height:65px;background:#555"></div>
<div class="a" style="left:604px;top:203px;width:1px;height:339px;background:#828282"></div>
<div class="a" style="left:604px;top:203px;width:354px;height:1px;background:#828282"></div>
<div class="a" style="left:605px;top:204px;width:44px;height:338px;background:#f0f0f0"></div>
<div class="a" style="left:649px;top:204px;width:292px;height:338px;background:#dcd5ca"></div>
<svg style="left:649px;top:456px" width="292" height="86" shape-rendering="crispEdges"><defs><pattern id="hp1" width="8" height="8" patternUnits="userSpaceOnUse" x="7" y="0"><rect width="8" height="8" fill="#dcd5ca"/><path d="M0 7h1v1h-1zM1 6h1v1h-1zM2 5h1v1h-1zM3 4h1v1h-1zM4 3h1v1h-1zM5 2h1v1h-1zM6 1h1v1h-1zM7 0h1v1h-1z" fill="#bfb8ad"/></pattern></defs><rect width="292" height="86" fill="url(#hp1)"/></svg>
<div class="t" style="left:605px;top:208px;width:35px;text-align:right;font-size:9.6px;letter-spacing:-0.35px;color:#8f8f8f;-webkit-text-stroke:0">691</div>
<div class="m" style="left:649px;top:205px"><span style="color:#999999">  bfa01_gain_nom,</span></div>
<div class="t" style="left:605px;top:229px;width:35px;text-align:right;font-size:9.6px;letter-spacing:-0.35px;color:#8f8f8f;-webkit-text-stroke:0">692</div>
<div class="m" style="left:649px;top:226px"><span style="color:#999999">  amp2_gain_nom, amp2_NF_nom,</span></div>
<div class="t" style="left:605px;top:250px;width:35px;text-align:right;font-size:9.6px;letter-spacing:-0.35px;color:#8f8f8f;-webkit-text-stroke:0">693</div>
<div class="m" style="left:649px;top:247px"><span style="color:#999999">  amp3_gain_nom, amp3_NF_nom,</span></div>
<div class="t" style="left:605px;top:271px;width:35px;text-align:right;font-size:9.6px;letter-spacing:-0.35px;color:#8f8f8f;-webkit-text-stroke:0">694</div>
<div class="m" style="left:649px;top:268px"><span style="color:#999999">) )</span></div>
<div class="t" style="left:605px;top:292px;width:35px;text-align:right;font-size:9.6px;letter-spacing:-0.35px;color:#8f8f8f;-webkit-text-stroke:0">695</div>
<div class="t" style="left:605px;top:313px;width:35px;text-align:right;font-size:9.6px;letter-spacing:-0.35px;color:#8f8f8f;-webkit-text-stroke:0">696</div>
<div class="t" style="left:605px;top:334px;width:35px;text-align:right;font-size:9.6px;letter-spacing:-0.35px;color:#8f8f8f;-webkit-text-stroke:0">697</div>
<div class="a" style="left:649px;top:330px;width:292px;height:21px;background:#3d6195"></div>
<div class="m" style="left:649px;top:331px"><span style="color:#b2b2b2"># Section 6.</span><span style="color:#ffe040">4</span><span style="color:#b2b2b2">: In</span><span style="color:#ffe040">voke SciPy</span><span style="color:#b2b2b2"> op</span></div>
<div class="t" style="left:605px;top:355px;width:35px;text-align:right;font-size:9.6px;letter-spacing:-0.35px;color:#8f8f8f;-webkit-text-stroke:0">698</div>
<div class="a" style="left:649px;top:351px;width:292px;height:21px;background:#3d6195"></div>
<div class="m" style="left:649px;top:352px"><span style="color:#b2b2b2"># </span><span style="color:#ffe040">fun</span><span style="color:#b2b2b2">ction.</span></div>
<div class="t" style="left:605px;top:376px;width:35px;text-align:right;font-size:9.6px;letter-spacing:-0.35px;color:#8f8f8f;-webkit-text-stroke:0">699</div>
<div class="t" style="left:605px;top:397px;width:35px;text-align:right;font-size:9.6px;letter-spacing:-0.35px;color:#8f8f8f;-webkit-text-stroke:0">700</div>
<div class="m" style="left:649px;top:394px"><span style="color:#999999"># Initialize count of calls to</span></div>
<div class="t" style="left:605px;top:418px;width:35px;text-align:right;font-size:9.6px;letter-spacing:-0.35px;color:#8f8f8f;-webkit-text-stroke:0">701</div>
<div class="m" style="left:649px;top:415px"><span style="color:#999999">XY_calls= 0</span></div>
<div class="t" style="left:605px;top:439px;width:35px;text-align:right;font-size:9.6px;letter-spacing:-0.35px;color:#8f8f8f;-webkit-text-stroke:0">702</div>
<div class="a" style="left:941px;top:204px;width:18px;height:338px;background:#f0f0f0"></div>
<svg style="left:947px;top:211px" width="8" height="6" viewBox="0 0 8 6"><path d="M0.8 4.8 L4 1.4 L7.2 4.8" fill="none" stroke="#444" stroke-width="1.7"/></svg>
<div class="a" style="left:942px;top:439px;width:15px;height:17px;background:#cdcdcd"></div>
<svg style="left:947px;top:475px" width="8" height="6" viewBox="0 0 8 6"><path d="M0.8 0.8 L4 4.2 L7.2 0.8" fill="none" stroke="#444" stroke-width="1.7"/></svg>
<div class="a" style="left:941px;top:486px;width:18px;height:1px;background:#fff"></div>
<svg style="left:946px;top:493px" width="8" height="8" viewBox="0 0 8 8"><path d="M0.5 1 L7.5 1" stroke="#222" stroke-width="1.2"/><path d="M4 2 L7.5 7 L0.5 7z" fill="#222"/></svg>
<svg style="left:946px;top:510px" width="8" height="8" viewBox="0 0 8 8"><circle cx="4" cy="4" r="3" fill="#777" stroke="#111" stroke-width="1.1"/><circle cx="3.3" cy="3.3" r="1.1" fill="#ddd"/></svg>
<svg style="left:946px;top:529px" width="8" height="8" viewBox="0 0 8 8"><path d="M0.5 1 L7.5 1 L4 6z" fill="#222"/><path d="M0.5 7 L7.5 7" stroke="#222" stroke-width="1.2"/></svg>
<svg style="left:610px;top:336px" width="12" height="10" viewBox="0 0 12 10"><path d="M11.5 3 L6 3 L6 0.5 L0.5 5 L6 9.5 L6 7 L11.5 7z" fill="#f7d058" stroke="#8a7030"/></svg>
<div class="a" style="left:614px;top:351px;width:1px;height:17px;background:#555"></div>
<div class="a" style="left:614px;top:367px;width:5px;height:1px;background:#555"></div>
<svg style="left:610px;top:462px" width="12" height="10" viewBox="0 0 12 10"><path d="M11.5 3 L6 3 L6 0.5 L0.5 5 L6 9.5 L6 7 L11.5 7z" fill="#f7d058" stroke="#8a7030"/></svg>
<div class="a" style="left:614px;top:477px;width:1px;height:65px;background:#555"></div>
<div class="a" style="left:244px;top:542px;width:357px;height:17px;background:#f0f0f0"></div>
<div class="t" style="left:247px;top:544.20px;font-size:11.5px;color:#000;">708: 1</div>
<div class="a" style="left:344px;top:543px;width:1px;height:15px;background:#d8d8d8"></div>
<div class="t" style="left:349px;top:544.03px;font-size:12px;color:#000;">Indentation</div>
<div class="a" style="left:477px;top:543px;width:1px;height:15px;background:#d8d8d8"></div>
<div class="a" style="left:497px;top:543px;width:1px;height:15px;background:#d8d8d8"></div>
<svg style="left:503px;top:547px" width="6" height="8" viewBox="0 0 6 8"><path d="M4.8 0.8 L1.4 4 L4.8 7.2" fill="none" stroke="#444" stroke-width="1.7"/></svg>
<div class="a" style="left:515px;top:543px;width:17px;height:15px;background:#cdcdcd"></div>
<svg style="left:571px;top:547px" width="6" height="8" viewBox="0 0 6 8"><path d="M1.2 0.8 L4.6 4 L1.2 7.2" fill="none" stroke="#444" stroke-width="1.7"/></svg>
<div class="a" style="left:604px;top:542px;width:355px;height:17px;background:#f0f0f0"></div>
<div class="a" style="left:704px;top:543px;width:1px;height:15px;background:#d8d8d8"></div>
<div class="a" style="left:837px;top:543px;width:1px;height:15px;background:#d8d8d8"></div>
<div class="a" style="left:857px;top:543px;width:1px;height:15px;background:#d8d8d8"></div>
<svg style="left:862px;top:547px" width="6" height="8" viewBox="0 0 6 8"><path d="M4.8 0.8 L1.4 4 L4.8 7.2" fill="none" stroke="#444" stroke-width="1.7"/></svg>
<div class="a" style="left:873px;top:543px;width:17px;height:15px;background:#cdcdcd"></div>
<svg style="left:929px;top:547px" width="6" height="8" viewBox="0 0 6 8"><path d="M1.2 0.8 L4.6 4 L1.2 7.2" fill="none" stroke="#444" stroke-width="1.7"/></svg>
<div class="a" style="left:244px;top:559px;width:715px;height:1px;background:#a0a0a0"></div>
<div class="a" style="left:244px;top:560px;width:715px;height:1px;background:#a0a0a0"></div>
<div class="a" style="left:244px;top:560px;width:1px;height:61px;background:#828282"></div>
<div class="a" style="left:245px;top:561px;width:714px;height:60px;background:#f0f0f0"></div>
<div class="a" style="left:260px;top:561px;width:439px;height:21px;background:#982a2c"></div>
<div class="a" style="left:245px;top:582px;width:714px;height:1px;background:#c8c8c8"></div>
<svg style="left:259px;top:583px" width="700" height="21" shape-rendering="crispEdges"><defs><pattern id="hp1" width="8" height="8" patternUnits="userSpaceOnUse" x="5" y="1"><rect width="8" height="8" fill="#dcd5ca"/><path d="M0 7h1v1h-1zM1 6h1v1h-1zM2 5h1v1h-1zM3 4h1v1h-1zM4 3h1v1h-1zM5 2h1v1h-1zM6 1h1v1h-1zM7 0h1v1h-1z" fill="#bfb8ad"/></pattern></defs><rect width="700" height="21" fill="url(#hp1)"/></svg>
<div class="a" style="left:258px;top:561px;width:1px;height:43px;background:#d0d0d0"></div>
<svg style="left:246px;top:567px" width="12" height="11" viewBox="0 0 12 11"><path d="M0.5 3.5 L6 3.5 L6 0.5 L11.5 5.5 L6 10.5 L6 7.5 L0.5 7.5z" fill="#fff" stroke="#555"/></svg>
<svg style="left:246px;top:588px" width="12" height="11" viewBox="0 0 12 11"><path d="M11.5 3.5 L6 3.5 L6 0.5 L0.5 5.5 L6 10.5 L6 7.5 L11.5 7.5z" fill="#fff" stroke="#555"/></svg>
<div class="m" style="left:259px;top:562px;color:#ffff00">      os.rename(main_output_file, new_name)¶</div>
<div class="a" style="left:262px;top:570px;width:3px;height:3px;background:#ffff00"></div>
<div class="a" style="left:272px;top:570px;width:3px;height:3px;background:#ffff00"></div>
<div class="a" style="left:282px;top:570px;width:3px;height:3px;background:#ffff00"></div>
<div class="a" style="left:292px;top:570px;width:3px;height:3px;background:#ffff00"></div>
<div class="a" style="left:302px;top:570px;width:3px;height:3px;background:#ffff00"></div>
<div class="a" style="left:312px;top:570px;width:3px;height:3px;background:#ffff00"></div>
<div class="a" style="left:592px;top:570px;width:3px;height:3px;background:#ffff00"></div>
<svg style="left:250px;top:609px" width="6" height="8" viewBox="0 0 6 8"><path d="M4.8 0.8 L1.4 4 L4.8 7.2" fill="none" stroke="#bbb" stroke-width="1.7"/></svg>
<svg style="left:947px;top:609px" width="6" height="8" viewBox="0 0 6 8"><path d="M1.2 0.8 L4.6 4 L1.2 7.2" fill="none" stroke="#bbb" stroke-width="1.7"/></svg>
<div class="a" style="left:201px;top:621px;width:758px;height:1px;background:#fff"></div>
<div class="a" style="left:201px;top:622px;width:758px;height:1px;background:#d4d4d4"></div>
<div class="a" style="left:201px;top:623px;width:758px;height:18px;background:#f0f0f0"></div>
<svg style="left:213px;top:628px" width="10" height="11" viewBox="0 0 10 11"><g stroke="#e81818" stroke-width="2"><line x1="0" y1="4" x2="10" y2="4"/><line x1="0" y1="7.5" x2="10" y2="7.5"/><line x1="7.5" y1="0.5" x2="2.5" y2="10.5"/></g></svg>
<div class="t" style="left:230px;top:625.13px;font-size:11.7px;color:#000;">2 difference section(s)</div>
<div class="a" style="left:425px;top:624px;width:1px;height:17px;background:#d8d8d8"></div>
<div class="t" style="left:430px;top:625.03px;font-size:12px;color:#000;">Important Left Orphan</div>
<div class="a" style="left:725px;top:624px;width:1px;height:17px;background:#d8d8d8"></div>
<div class="t" style="left:753px;top:625.13px;font-size:11.7px;color:#000;">Insert</div>
<div class="a" style="left:806px;top:624px;width:1px;height:17px;background:#d8d8d8"></div>
<div class="t" style="left:811px;top:625.13px;font-size:11.7px;color:#000;">Load time: 0.06 seconds</div>
<svg style="left:947px;top:631px" width="10" height="10" viewBox="0 0 10 10"><g fill="#bbb"><rect x="7" y="1" width="2" height="2"/><rect x="4" y="4" width="2" height="2"/><rect x="7" y="4" width="2" height="2"/><rect x="1" y="7" width="2" height="2"/><rect x="4" y="7" width="2" height="2"/><rect x="7" y="7" width="2" height="2"/></g></svg>

</body></html>
